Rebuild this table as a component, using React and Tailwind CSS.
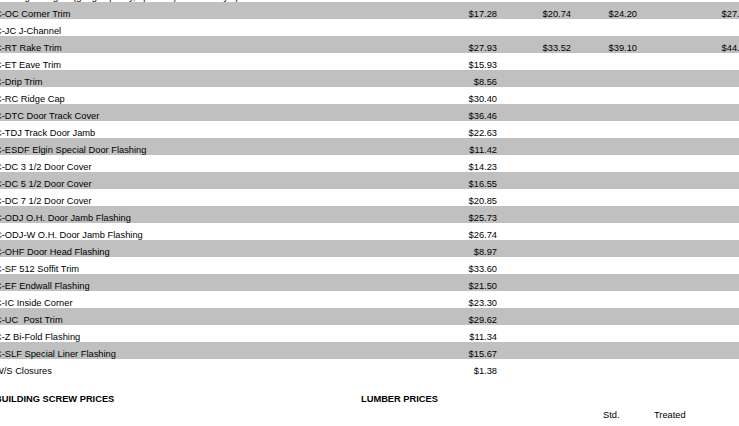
import React from "react";

const rows = [
  { name: "C-OC Corner Trim", prices: ["$17.28", "$20.74", "$24.20", "$27.66"] },
  { name: "C-JC J-Channel", prices: [] },
  { name: "C-RT Rake Trim", prices: ["$27.93", "$33.52", "$39.10", "$44.69"] },
  { name: "C-ET Eave Trim", prices: ["$15.93"] },
  { name: "C-Drip Trim", prices: ["$8.56"] },
  { name: "C-RC Ridge Cap", prices: ["$30.40"] },
  { name: "C-DTC Door Track Cover", prices: ["$36.46"] },
  { name: "C-TDJ Track Door Jamb", prices: ["$22.63"] },
  { name: "C-ESDF Elgin Special Door Flashing", prices: ["$11.42"] },
  { name: "C-DC 3 1/2 Door Cover", prices: ["$14.23"] },
  { name: "C-DC 5 1/2 Door Cover", prices: ["$16.55"] },
  { name: "C-DC 7 1/2 Door Cover", prices: ["$20.85"] },
  { name: "C-ODJ O.H. Door Jamb Flashing", prices: ["$25.73"] },
  { name: "C-ODJ-W O.H. Door Jamb Flashing", prices: ["$26.74"] },
  { name: "C-OHF Door Head Flashing", prices: ["$8.97"] },
  { name: "C-SF 512 Soffit Trim", prices: ["$33.60"] },
  { name: "C-EF Endwall Flashing", prices: ["$21.50"] },
  { name: "C-IC Inside Corner", prices: ["$23.30"] },
  { name: "C-UC  Post Trim", prices: ["$29.62"] },
  { name: "C-Z Bi-Fold Flashing", prices: ["$11.34"] },
  { name: "C-SLF Special Liner Flashing", prices: ["$15.67"] },
  { name: "W/S Closures", prices: ["$1.38"] },
];

const colWidths = ["w-[57px]", "w-[74px]", "w-[66px]", "w-[113px]"];

function PriceRow({ name, prices, shaded }) {
  return (
    <div className={`flex h-[17px] w-[760px] ${shaded ? "bg-[#c0c0c0]" : "bg-white"}`}>
      <div className="w-[445px] pt-[7px] leading-[10px] whitespace-pre">{name}</div>
      {colWidths.map((w, i) => (
        <div key={i} className={`${w} pt-[7px] leading-[10px] text-right`}>
          {prices[i] || ""}
        </div>
      ))}
    </div>
  );
}

export default function App() {
  return (
    <div
      className="w-[739px] h-[426px] overflow-hidden bg-white text-black text-[9.3px]"
      style={{ fontFamily: '"Liberation Sans", Arial, sans-serif' }}
    >
      <div className="ml-[-5px] mt-[-15px]">
        {/* header line, only its descenders show above the first row */}
        <div className="h-[17px] pt-[7px] leading-[10px] pl-[14px] whitespace-pre">
          Longer lengths (gauge specify, up to 20') available by special order
        </div>

        {rows.map((r, i) => (
          <PriceRow key={r.name} name={r.name} prices={r.prices} shaded={i % 2 === 0} />
        ))}

        <div className="flex pt-[18px] leading-[10px] font-bold">
          <div className="w-[366px]">BUILDING SCREW PRICES</div>
          <div>LUMBER PRICES</div>
        </div>

        <div className="flex pt-[6px] leading-[10px]">
          <div className="w-[608px]"></div>
          <div className="w-[51px]">Std.</div>
          <div>Treated</div>
        </div>
      </div>
    </div>
  );
}
